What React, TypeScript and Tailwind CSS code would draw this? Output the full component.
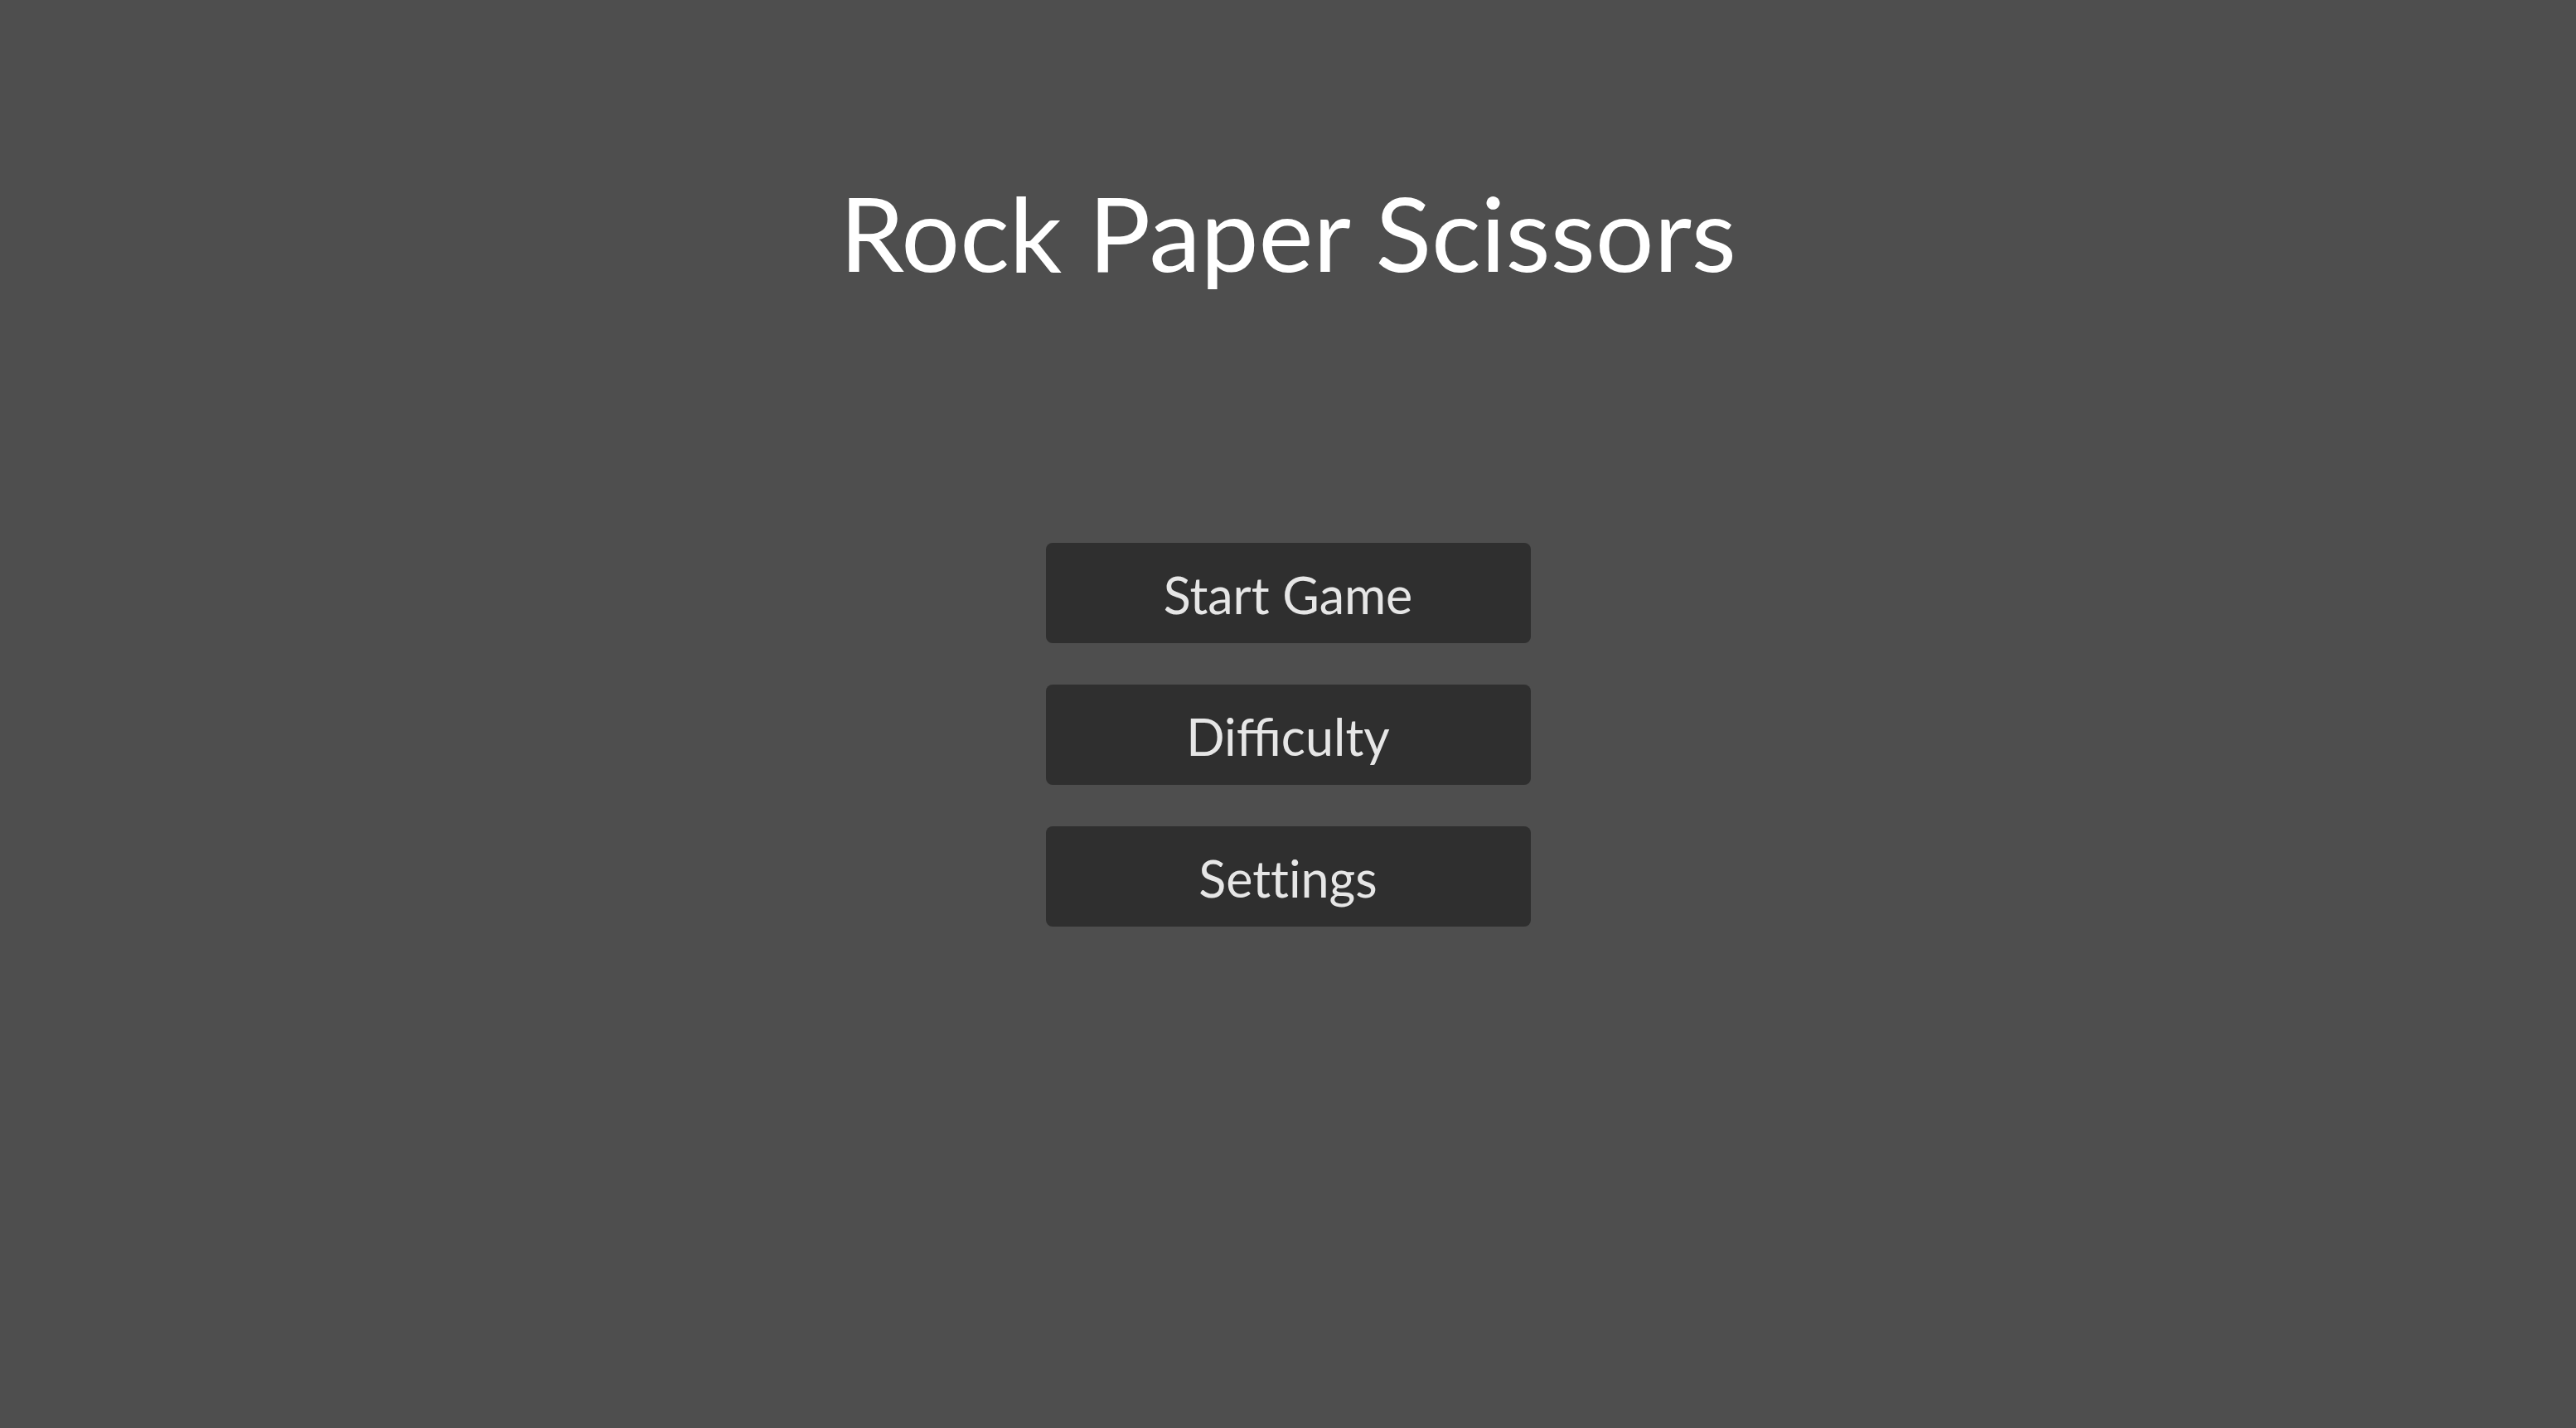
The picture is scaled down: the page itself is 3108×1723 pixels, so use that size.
const items = [
  { label: 'Start Game', extra: '' },
  { label: 'Difficulty', extra: '' },
  // Lato turns "ti" into a ligature, the reference doesn't
  { label: 'Settings', extra: '[font-variant-ligatures:none]' },
];

export default function App() {
  return (
    <div className="min-h-screen w-full bg-[#4e4e4e] flex flex-col items-center font-['Lato','Noto_Sans',sans-serif]">
      {/* title */}
      <h1 className="mt-[200px] text-[125px] leading-[160px] text-white font-normal">
        Rock Paper Scissors
      </h1>

      {/* menu */}
      <div className="mt-[295px] flex flex-col gap-[50px]">
        {items.map((item) => (
          <button
            key={item.label}
            className={`w-[585px] h-[121px] pt-[4px] rounded-[8px] bg-[#2f2f2f] text-[#e6e6e6] text-[61px] leading-none ${item.extra}`}
          >
            {item.label}
          </button>
        ))}
      </div>
    </div>
  );
}
